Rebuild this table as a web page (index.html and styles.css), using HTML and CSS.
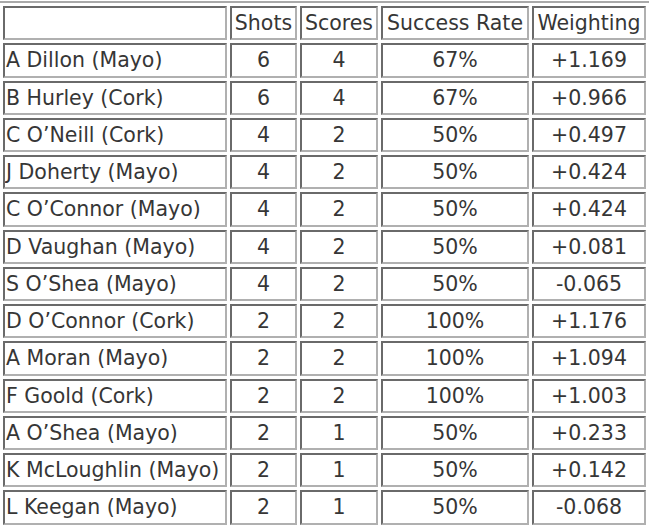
FILE: index.html
```html
<!DOCTYPE html>
<html>
<head>
<meta charset="utf-8">
<link rel="stylesheet" href="styles.css">
</head>
<body>
<table class="stats">
  <colgroup>
    <col class="c-name">
    <col class="c-shots">
    <col class="c-scores">
    <col class="c-rate">
    <col class="c-weight">
  </colgroup>
  <tr><td></td><td class="num">Shots</td><td class="num">Scores</td><td class="num">Success Rate</td><td class="num">Weighting</td></tr>
  <tr><td>A Dillon (Mayo)</td><td class="num">6</td><td class="num">4</td><td class="num">67%</td><td class="num">+1.169</td></tr>
  <tr><td>B Hurley (Cork)</td><td class="num">6</td><td class="num">4</td><td class="num">67%</td><td class="num">+0.966</td></tr>
  <tr><td>C O’Neill (Cork)</td><td class="num">4</td><td class="num">2</td><td class="num">50%</td><td class="num">+0.497</td></tr>
  <tr><td>J Doherty (Mayo)</td><td class="num">4</td><td class="num">2</td><td class="num">50%</td><td class="num">+0.424</td></tr>
  <tr><td>C O’Connor (Mayo)</td><td class="num">4</td><td class="num">2</td><td class="num">50%</td><td class="num">+0.424</td></tr>
  <tr><td>D Vaughan (Mayo)</td><td class="num">4</td><td class="num">2</td><td class="num">50%</td><td class="num">+0.081</td></tr>
  <tr><td>S O’Shea (Mayo)</td><td class="num">4</td><td class="num">2</td><td class="num">50%</td><td class="num">-0.065</td></tr>
  <tr><td>D O’Connor (Cork)</td><td class="num">2</td><td class="num">2</td><td class="num">100%</td><td class="num">+1.176</td></tr>
  <tr><td>A Moran (Mayo)</td><td class="num">2</td><td class="num">2</td><td class="num">100%</td><td class="num">+1.094</td></tr>
  <tr><td>F Goold (Cork)</td><td class="num">2</td><td class="num">2</td><td class="num">100%</td><td class="num">+1.003</td></tr>
  <tr><td>A O’Shea (Mayo)</td><td class="num">2</td><td class="num">1</td><td class="num">50%</td><td class="num">+0.233</td></tr>
  <tr><td>K McLoughlin (Mayo)</td><td class="num">2</td><td class="num">1</td><td class="num">50%</td><td class="num">+0.142</td></tr>
  <tr><td>L Keegan (Mayo)</td><td class="num">2</td><td class="num">1</td><td class="num">50%</td><td class="num">-0.068</td></tr>
</table>
</body>
</html>
```
FILE: styles.css
```css
html, body {
  margin: 0;
  padding: 0;
  background: #ffffff;
}

.stats {
  margin-top: 1px;
  width: 649px;
  table-layout: fixed;
  border-collapse: separate;
  border-spacing: 3px;
  border-top: 2px solid #a9a9a9;
  font-family: "DejaVu Sans", Verdana, sans-serif;
  font-size: 20.5px;
  color: #363636;
}

.c-name { width: 224px; }
.c-shots { width: 67px; }
.c-scores { width: 78px; }
.c-rate { width: 148px; }
.c-weight { width: 114px; }

.stats td {
  border-style: solid;
  border-width: 2px;
  border-color: #6a6a6a #b0b0b0 #b0b0b0 #6a6a6a;
  padding: 3px 1px;
  line-height: 24.25px;
  height: 24.25px;
  white-space: nowrap;
  overflow: hidden;
  text-align: left;
}

.stats td.num {
  text-align: center;
}
```
